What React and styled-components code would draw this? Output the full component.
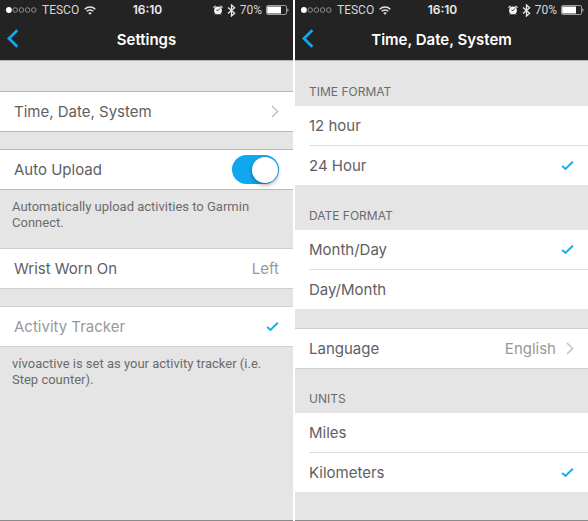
import React, { useState } from "react";
import styled, { createGlobalStyle, css } from "styled-components";

const colors = {
  bar: "#232323",
  page: "#e5e5e5",
  accent: "#11a7ee",
  text: "#606062",
  muted: "#98989b",
  line: "#b9b9bb",
};

const GlobalStyle = createGlobalStyle`
  * { box-sizing: border-box; }
  body { margin: 0; background: #fff; }
  body, button, input {
    font-family: Inter, "Liberation Sans", sans-serif;
  }
`;

const Screens = styled.div`
  display: grid;
  grid-template-columns: 1fr 1fr;
  gap: 2px;
  min-height: 100vh;
`;

const Screen = styled.section`
  display: flex;
  flex-direction: column;
  min-width: 0;
  background: ${colors.page};
  border-bottom: 1px solid #8a8a8a;
`;

const TopBar = styled.header`
  background: ${colors.bar};
  border-bottom: 1px solid #b4b4b4;
  color: #fff;
`;

const StatusBar = styled.div`
  display: grid;
  grid-template-columns: 1fr auto 1fr;
  align-items: center;
  height: 20px;
  padding: 0 4px 0 6px;
  font-family: Roboto, "Liberation Sans", sans-serif;
  font-size: 12px;
  line-height: 20px;
  color: #d6d6d6;
`;

const StatusGroup = styled.div`
  display: flex;
  align-items: center;
  gap: ${(p) => p.$gap};
  justify-content: ${(p) => (p.$end ? "flex-end" : "flex-start")};
`;

const Clock = styled.time`
  font-family: Inter, "Liberation Sans", sans-serif;
  font-weight: 600;
  color: #ececec;
`;

const TitleBar = styled.div`
  display: grid;
  grid-template-columns: 28px 1fr 28px;
  align-items: center;
  height: 40px;
`;

const BackButton = styled.button`
  display: flex;
  align-items: center;
  justify-content: center;
  height: 40px;
  padding: 0 2px 3px 0;
  border: 0;
  background: none;
  cursor: pointer;
`;

const Title = styled.h1`
  margin: 0;
  font-size: 15px;
  line-height: 20px;
  font-weight: 600;
  text-align: center;
  white-space: nowrap;
`;

const Content = styled.div`
  display: flex;
  flex-direction: column;
  padding-top: ${(p) => p.$top || "0"};
`;

const rowStyle = css`
  display: flex;
  align-items: center;
  width: 100%;
  padding: 0 14px;
  background: #fff;
  color: ${colors.text};
  font-size: 15px;
  line-height: 20px;
  text-align: left;
`;

const framedRow = css`
  ${rowStyle}
  height: 41px;
  border: 0 solid ${(p) => (p.$soft ? "#cfcfd1" : colors.line)};
  border-width: 1px 0;
`;

const ButtonRow = styled.button`
  ${framedRow}
  cursor: pointer;
`;

const LabelRow = styled.label`
  ${framedRow}
  color: ${(p) => (p.$disabled ? colors.muted : colors.text)};
`;

const RowText = styled.span`
  flex: 1;
`;

const RowValue = styled.span`
  color: ${colors.muted};
`;

const Chevron = styled.svg`
  flex: none;
  margin-left: 10px;
`;

const Gap = styled.div`
  height: ${(p) => p.$size};
`;

const Note = styled.p`
  margin: 0;
  padding: 9px 12px 17px;
  font-family: Roboto, "Liberation Sans", sans-serif;
  font-size: 13px;
  line-height: 16px;
  color: #6b6b6d;
`;

const Group = styled.fieldset`
  min-width: 0;
  margin: 0;
  padding: 0;
  border: 0;
`;

const GroupTitle = styled.legend`
  display: flex;
  align-items: flex-end;
  height: ${(p) => p.$height};
  padding: 0 14px 7px;
  font-size: 12px;
  line-height: 14px;
  color: #6b6b6d;
`;

const Options = styled.div`
  background: #fff;
`;

const Option = styled.label`
  ${rowStyle}
  width: auto;
  height: 39px;
  margin-left: 14px;
  padding-left: 0;
  cursor: pointer;

  & + & {
    height: 40px;
    border-top: 1px solid #dedee0;
  }
`;

const HiddenInput = styled.input`
  appearance: none;
  width: 0;
  height: 0;
  margin: 0;

  & ~ svg {
    visibility: hidden;
  }
  &:checked ~ svg {
    visibility: visible;
  }
`;

const Switch = styled.input`
  appearance: none;
  display: flex;
  align-items: center;
  width: 47px;
  height: 29px;
  margin: 0;
  padding: 1px;
  border-radius: 15px;
  background: #d5d5d5;
  cursor: pointer;

  &::before {
    content: "";
    width: 26px;
    height: 26px;
    border-radius: 50%;
    background: #fff;
    box-shadow: 0 2px 4px rgba(0, 0, 0, 0.35);
  }
  &:checked {
    justify-content: flex-end;
    background: ${colors.accent};
  }
`;

function SignalIcon() {
  return (
    <svg width="31" height="8" viewBox="0 0 31 8" aria-hidden="true">
      <circle cx="2.9" cy="4" r="2.9" fill="#fff" />
      {[9.2, 15.4, 21.6, 27.8].map((x) => (
        <circle key={x} cx={x} cy="4" r="2.3" fill="none" stroke="#a5a5a5" strokeWidth="0.8" />
      ))}
    </svg>
  );
}

function WifiIcon() {
  return (
    <svg width="12" height="9" viewBox="0 0 12 9" fill="none" stroke="#e4e4e4" strokeWidth="1.5" aria-hidden="true">
      <path d="M0.7 3.2C3.6 0.2 8.4 0.2 11.3 3.2" />
      <path d="M2.7 5.3C4.5 3.5 7.5 3.5 9.3 5.3" />
      <path d="M6 8.8L4.2 6.9C5.2 6 6.8 6 7.8 6.9Z" fill="#e4e4e4" stroke="none" />
    </svg>
  );
}

function AlarmIcon() {
  return (
    <svg width="10" height="10" viewBox="0 0 10 10" aria-hidden="true">
      <circle cx="5" cy="5.4" r="3.9" fill="#f4f4f4" />
      <path d="M0.9 2.3L2.3 1.1M9.1 2.3L7.7 1.1" stroke="#e6e6e6" strokeWidth="1.2" strokeLinecap="round" />
      <path d="M2.6 8.6L2 9.3M7.4 8.6L8 9.3" stroke="#bdbdbd" strokeWidth="0.9" strokeLinecap="round" />
      <path d="M6.7 3.5L5 5.6L3.5 5.1" fill="none" stroke={colors.bar} strokeWidth="0.9" />
    </svg>
  );
}

function BluetoothIcon() {
  return (
    <svg width="9" height="13" viewBox="0 0 9 13" fill="none" stroke="#e8e8e8" strokeWidth="1.3" aria-hidden="true">
      <path d="M1 3.6L7.6 9.2L4.5 12V1L7.6 3.8L1 9.4" />
    </svg>
  );
}

function BatteryIcon() {
  return (
    <svg width="23" height="10" viewBox="0 0 23 10" aria-hidden="true">
      <rect x="0.5" y="0.5" width="20" height="9" rx="1.5" fill="none" stroke="#9c9c9c" />
      <rect x="1.2" y="1.5" width="13.8" height="7" fill="#fff" />
      <path d="M21.5 3.2C22.7 3.6 22.7 6.4 21.5 6.8Z" fill="#e8e8e8" />
    </svg>
  );
}

function CheckIcon() {
  return (
    <svg width="13" height="11" viewBox="0 0 13 11" fill="none" stroke="#1ba9ef" strokeWidth="2" aria-hidden="true">
      <path d="M1.2 5.9L4.5 8.9L11.8 1.7" />
    </svg>
  );
}

function ChevronIcon() {
  return (
    <Chevron width="8" height="13" viewBox="0 0 8 13" fill="none" stroke="#c4c4c8" strokeWidth="1.6" aria-hidden="true">
      <path d="M1 1L6.6 6.5L1 12" />
    </Chevron>
  );
}

function Header({ title }) {
  return (
    <TopBar>
      <StatusBar>
        <StatusGroup $gap="5px">
          <SignalIcon />
          <span>TESCO</span>
          <WifiIcon />
        </StatusGroup>
        <Clock>16:10</Clock>
        <StatusGroup $gap="4px" $end>
          <AlarmIcon />
          <BluetoothIcon />
          <span>70%</span>
          <BatteryIcon />
        </StatusGroup>
      </StatusBar>
      <TitleBar>
        <BackButton type="button" aria-label="Back">
          <svg width="12" height="19" viewBox="0 0 12 19" fill="none" stroke={colors.accent} strokeWidth="2.8" aria-hidden="true">
            <path d="M10.3 1.2L2 9.5L10.3 17.8" />
          </svg>
        </BackButton>
        <Title>{title}</Title>
      </TitleBar>
    </TopBar>
  );
}

function OptionGroup({ title, name, options, initial, titleHeight = "45px" }) {
  const [value, setValue] = useState(initial);
  return (
    <Group>
      <GroupTitle $height={titleHeight}>{title}</GroupTitle>
      <Options>
        {options.map((option) => (
          <Option key={option}>
            <HiddenInput
              type="radio"
              name={name}
              checked={value === option}
              onChange={() => setValue(option)}
            />
            <RowText>{option}</RowText>
            <CheckIcon />
          </Option>
        ))}
      </Options>
    </Group>
  );
}

export default function App() {
  const [autoUpload, setAutoUpload] = useState(true);
  return (
    <>
      <GlobalStyle />
      <Screens>
        <Screen>
          <Header title="Settings" />
          <Content $top="30px">
            <ButtonRow type="button">
              <RowText>Time, Date, System</RowText>
              <ChevronIcon />
            </ButtonRow>
            <Gap $size="17px" />
            <LabelRow>
              <RowText>Auto Upload</RowText>
              <Switch
                type="checkbox"
                role="switch"
                checked={autoUpload}
                onChange={(e) => setAutoUpload(e.target.checked)}
              />
            </LabelRow>
            <Note>Automatically upload activities to Garmin Connect.</Note>
            <ButtonRow type="button" $soft>
              <RowText>Wrist Worn On</RowText>
              <RowValue>Left</RowValue>
            </ButtonRow>
            <Gap $size="17px" />
            <LabelRow $soft $disabled>
              <HiddenInput type="checkbox" defaultChecked disabled />
              <RowText>Activity Tracker</RowText>
              <CheckIcon />
            </LabelRow>
            <Note>vívoactive is set as your activity tracker (i.e. Step counter).</Note>
          </Content>
        </Screen>

        <Screen>
          <Header title="Time, Date, System" />
          <Content>
            <OptionGroup
              title="TIME FORMAT"
              name="time-format"
              options={["12 hour", "24 Hour"]}
              initial="24 Hour"
            />
            <OptionGroup
              title="DATE FORMAT"
              name="date-format"
              options={["Month/Day", "Day/Month"]}
              initial="Month/Day"
            />
            <Gap $size="19px" />
            <ButtonRow type="button" $soft>
              <RowText>Language</RowText>
              <RowValue>English</RowValue>
              <ChevronIcon />
            </ButtonRow>
            <OptionGroup
              title="UNITS"
              name="units"
              options={["Miles", "Kilometers"]}
              initial="Kilometers"
              titleHeight="44px"
            />
          </Content>
        </Screen>
      </Screens>
    </>
  );
}
